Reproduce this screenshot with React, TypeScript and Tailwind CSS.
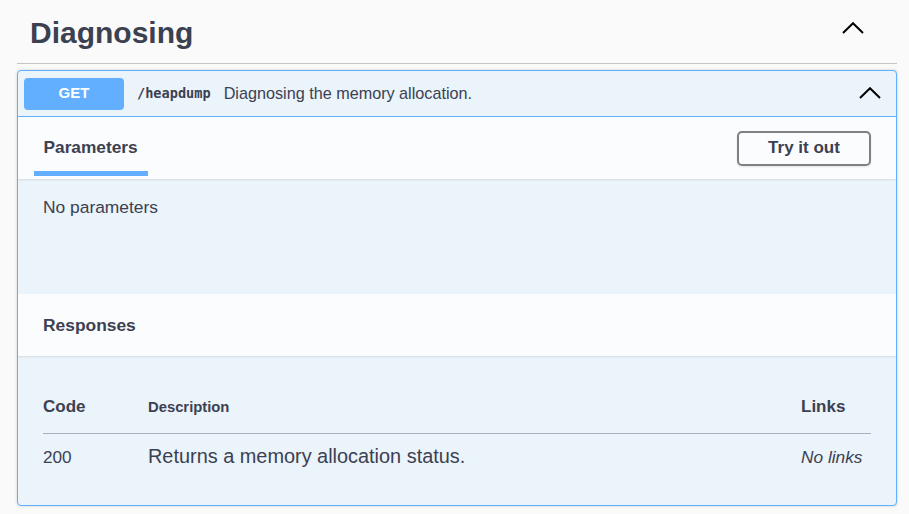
import React from "react";

const sans = { fontFamily: "'Liberation Sans', Arial, sans-serif" };

function Chevron() {
  return (
    <svg width="22" height="12" viewBox="0 0 22 12" fill="none">
      <polyline points="1,11 11,1.2 21,11" stroke="#000" strokeWidth="2" />
    </svg>
  );
}

export default function App() {
  return (
    <div className="min-h-[514px] w-full bg-[#fafafa] pl-[17px] pr-[12px] text-[#3b4151]" style={sans}>
      {/* Tag header */}
      <div className="flex h-[64px] items-start justify-between border-b border-[#c4c6ca] pl-[13px] pr-[33px]">
        <h4 className="mt-[15px] text-[30px] font-bold leading-[36px]">Diagnosing</h4>
        <div className="mt-[22px]">
          <Chevron />
        </div>
      </div>

      {/* Operation block */}
      <div className="mt-[6px] overflow-hidden rounded-[4px] border border-[#61affe] bg-[#ebf3fb] shadow-[0_0_3px_rgba(0,0,0,0.19)]">
        {/* Summary */}
        <div className="flex h-[46px] items-center border-b border-[#61affe] pl-[6px] pr-[15px]">
          <div className="flex h-[32px] w-[100px] items-center justify-center rounded-[4px] bg-[#61affe] text-[15px] font-bold text-white">
            GET
          </div>
          <span
            className="ml-[13px] text-[13.6px] font-bold text-[#3b4151]"
            style={{ fontFamily: "'DejaVu Sans Mono', 'Liberation Mono', monospace" }}
          >
            /heapdump
          </span>
          <span className="ml-[13px] text-[16.2px] text-[#3b4151]">Diagnosing the memory allocation.</span>
          <div className="ml-auto mt-[-2px]">
            <Chevron />
          </div>
        </div>

        {/* Parameters header */}
        <div className="relative flex h-[62px] items-center justify-between bg-[#fbfcfe] px-[25px] shadow-[0_1px_2px_rgba(0,0,0,0.1)]">
          <div className="-ml-[9px] flex flex-col self-stretch justify-end pb-[3px]">
            <div className="px-[9.5px] text-[17.3px] font-bold leading-[20px]">Parameters</div>
            <div className="mt-[14px] h-[5px] w-[114px] bg-[#61affe]" />
          </div>
          <button className="h-[35px] w-[134px] rounded-[5px] border-2 border-[#808080] bg-transparent text-[17px] font-bold text-[#3b4151] shadow-[0_1px_2px_rgba(0,0,0,0.1)]">
            Try it out
          </button>
        </div>

        {/* Parameters body */}
        <div className="h-[115px] px-[25px] pt-[18px]">
          <p className="text-[17.4px] leading-[20px]">No parameters</p>
        </div>

        {/* Responses header */}
        <div className="relative flex h-[62px] items-center bg-[#fbfcfe] px-[25px] shadow-[0_1px_2px_rgba(0,0,0,0.1)]">
          <h4 className="text-[17.4px] font-bold leading-[20px]">Responses</h4>
        </div>

        {/* Responses table */}
        <div className="px-[25px] pb-[37px] pt-[41px]">
          <div className="grid grid-cols-[105px_1fr_70px] items-baseline border-b border-[#a9b0ba] pb-[16px]">
            <div className="text-[17px] font-bold leading-[20px]">Code</div>
            <div className="text-[14.8px] font-bold leading-[20px]">Description</div>
            <div className="text-[17px] font-bold leading-[20px]">Links</div>
          </div>
          <div className="grid grid-cols-[105px_1fr_70px] items-baseline pt-[10px]">
            <div className="text-[17.2px] leading-[20px]">200</div>
            <div className="text-[19.9px] leading-[24px]">Returns a memory allocation status.</div>
            <div className="text-[17.3px] italic leading-[20px]">No links</div>
          </div>
        </div>
      </div>
    </div>
  );
}
